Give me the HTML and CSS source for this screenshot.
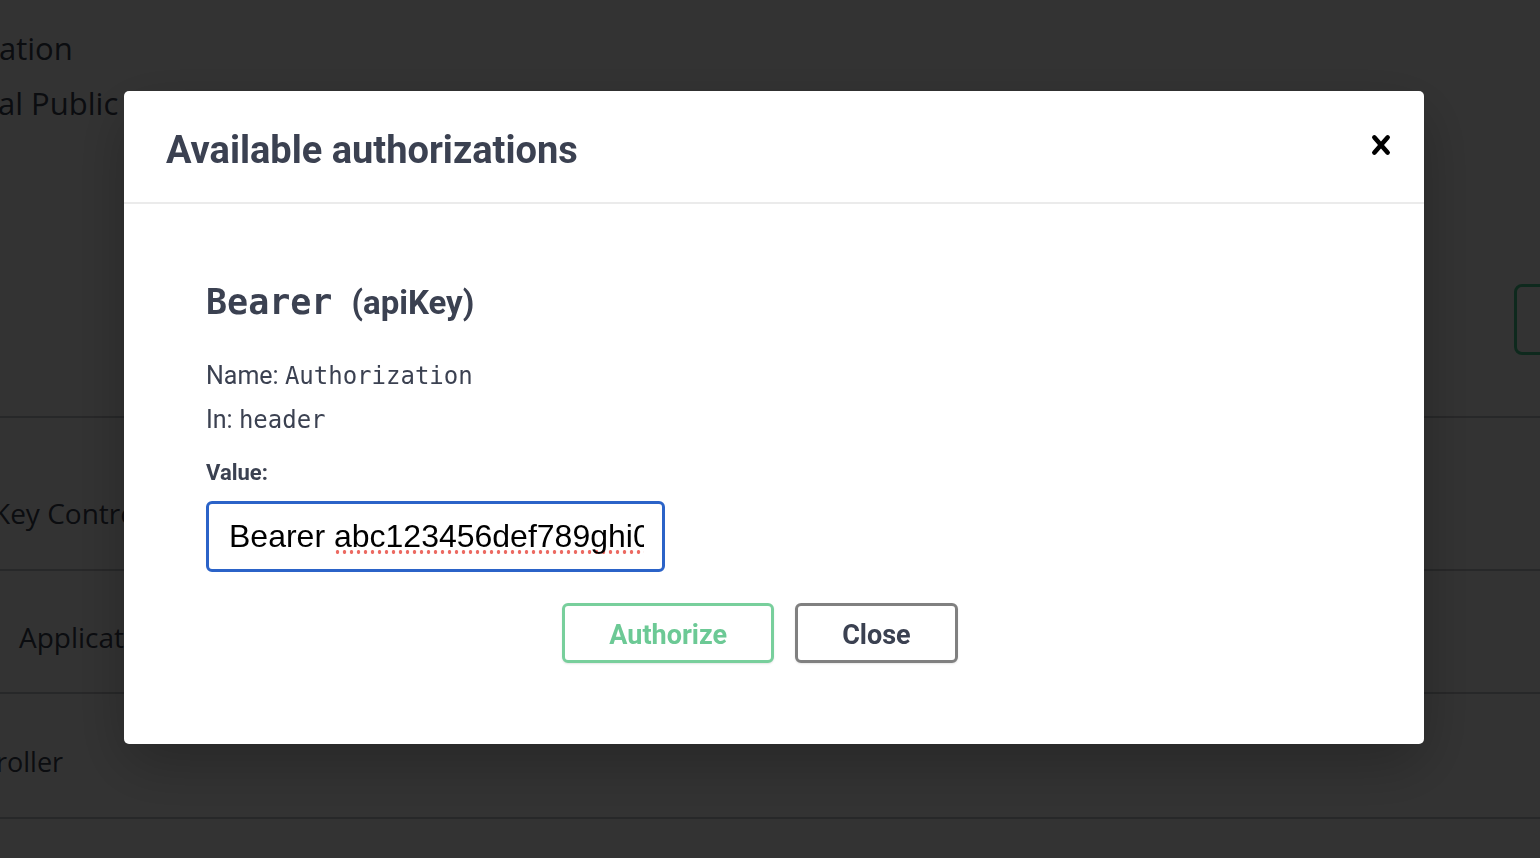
FILE: index.html
```html
<!DOCTYPE html>
<html lang="en">
<head>
<meta charset="utf-8">
<title>Available authorizations</title>
<link rel="stylesheet" href="styles.css">
</head>
<body>
<div class="page">
  <div class="info">
    <div class="info-line info-first">ation</div>
    <div class="info-line info-second">al Public API Documentation</div>
  </div>
  <div class="scheme-bar">
    <div class="page-authorize" aria-label="Authorize"></div>
  </div>
  <div class="tag tag-first"><span class="tag-name tag-name-first">Key Controller</span></div>
  <div class="tag tag-second"><span class="tag-name tag-name-second">Application Controller</span></div>
  <div class="tag tag-third"><span class="tag-name tag-name-third">roller</span></div>
  <div class="tag tag-last"></div>
</div>

<div class="backdrop"></div>

<div class="modal">
  <div class="modal-header">
    <h3 class="modal-title">Available authorizations</h3>
    <button class="modal-close" aria-label="Close">
      <svg width="38" height="38" viewBox="0 0 20 20" aria-hidden="true">
        <path d="M14.348 14.849a1.2 1.2 0 0 1-1.697 0L10 11.819l-2.651 3.029a1.2 1.2 0 1 1-1.697-1.697l2.758-3.15-2.759-3.152a1.2 1.2 0 1 1 1.697-1.697L10 8.183l2.651-3.031a1.2 1.2 0 1 1 1.697 1.697l-2.758 3.152 2.758 3.15a1.2 1.2 0 0 1 0 1.698z"/>
      </svg>
    </button>
  </div>
  <div class="modal-body">
    <h4 class="scheme-title"><code class="scheme-code">Bearer</code><span class="scheme-type">(apiKey)</span></h4>
    <p class="scheme-row scheme-row-first">Name: <code class="scheme-mono">Authorization</code></p>
    <p class="scheme-row">In: <code class="scheme-mono">header</code></p>
    <label class="value-label">Value:</label>
    <div class="value-input">
      <div class="value-text">Bearer <span class="misspelled">abc123456def789ghi0jkl012mno345</span></div>
    </div>
    <div class="btn-row">
      <button class="btn btn-authorize">Authorize</button>
      <button class="btn btn-close">Close</button>
    </div>
  </div>
</div>
</body>
</html>
```

FILE: styles.css
```css
html, body {
  margin: 0;
  padding: 0;
}

body {
  background: #ffffff;
  width: 1540px;
  height: 858px;
  overflow: hidden;
  font-family: "Open Sans", "Liberation Sans", sans-serif;
  color: #3b4151;
}

/* ---------- page beneath the backdrop ---------- */
.page {
  display: flex;
  flex-direction: column;
  height: 858px;
  overflow: hidden;
}

.info {
  padding-top: 21px;
}

.info-line {
  font-size: 31px;
  line-height: 55px;
  white-space: nowrap;
}

.info-first {
  margin-left: -1px;
}

.info-second {
  margin-left: -2px;
}

.scheme-bar {
  display: flex;
  justify-content: flex-end;
  padding: 153px 0 61px;
}

.page-authorize {
  box-sizing: border-box;
  width: 140px;
  height: 71px;
  margin-right: -114px;
  border: 3px solid #49cc90;
  border-radius: 8px;
}

.tag {
  box-sizing: border-box;
  border-top: 2px solid rgba(59, 65, 81, 0.3);
  font-size: 28px;
  line-height: 38px;
  white-space: nowrap;
  flex: none;
}

.tag-first {
  height: 153px;
  padding-top: 76px;
}

.tag-second {
  height: 123px;
  padding-top: 47px;
}

.tag-third {
  height: 125px;
  padding-top: 48px;
}

.tag-last {
  height: 60px;
}

.tag-name-first {
  display: inline-block;
  margin-left: -7px;
}

.tag-name-second {
  display: inline-block;
  margin-left: 19px;
}

.tag-name-third {
  display: inline-block;
  margin-left: -4px;
  font-size: 27px;
}

/* ---------- backdrop ---------- */
.backdrop {
  position: fixed;
  inset: 0;
  background: rgba(0, 0, 0, 0.8);
}

/* ---------- modal ---------- */
.modal {
  position: fixed;
  left: 124px;
  top: 91px;
  width: 1300px;
  background: #ffffff;
  border-radius: 5px;
  box-shadow: 0 20px 60px 0 rgba(0, 0, 0, 0.25);
  font-family: Roboto, "Liberation Sans", sans-serif;
  color: #3b4151;
}

.modal-header {
  box-sizing: border-box;
  height: 113px;
  display: flex;
  align-items: center;
  justify-content: space-between;
  padding: 0 24px 0 42px;
  border-bottom: 2px solid #ebebeb;
}

.modal-title {
  margin: 7px 0 0;
  font-size: 38px;
  font-weight: 700;
  line-height: 44px;
  color: #3b4151;
}

.modal-close {
  margin-top: -3px;
  padding: 0;
  border: 0;
  background: none;
  width: 38px;
  height: 38px;
  display: flex;
}

.modal-close svg {
  fill: #000000;
}

.modal-body {
  padding: 76px 110px 81px 82px;
}

.scheme-title {
  margin: 0;
  display: flex;
  align-items: baseline;
  gap: 19px;
  line-height: 44px;
  color: #3b4151;
}

.scheme-code {
  font-family: "DejaVu Sans Mono", "Liberation Mono", monospace;
  font-size: 35px;
  font-weight: 700;
}

.scheme-type {
  font-size: 33px;
  font-weight: 700;
}

.scheme-row {
  margin: 0;
  font-size: 25px;
  line-height: 44px;
}

.scheme-row-first {
  margin-top: 29px;
}

.scheme-mono {
  font-family: "DejaVu Sans Mono", "Liberation Mono", monospace;
  font-size: 24px;
}

.value-label {
  display: block;
  margin-top: 16px;
  font-size: 22px;
  font-weight: 700;
  line-height: 30px;
}

.value-input {
  box-sizing: border-box;
  margin-top: 13px;
  width: 459px;
  height: 71px;
  padding: 0 18px 0 20px;
  border: 3px solid #2b63c8;
  border-radius: 6px;
  display: flex;
  align-items: center;
}

.value-text {
  overflow: hidden;
  white-space: nowrap;
  font-family: "Liberation Sans", Arial, sans-serif;
  font-size: 32px;
  color: #000000;
}

.misspelled {
  background-image: radial-gradient(circle at 3.5px 2px, #ec6a62 1.6px, rgba(236, 106, 98, 0) 2.1px);
  background-size: 7px 4px;
  background-repeat: repeat-x;
  background-position: 0 100%;
}

.btn-row {
  display: flex;
  justify-content: center;
  gap: 21px;
  margin-top: 31px;
}

.btn {
  box-sizing: border-box;
  height: 60px;
  padding: 0 44px;
  border: 3px solid #808080;
  border-radius: 6px;
  background: #ffffff;
  font-family: Roboto, "Liberation Sans", sans-serif;
  font-size: 27px;
  font-weight: 700;
  line-height: 54px;
  padding-top: 2px;
  box-shadow: 0 1px 2px rgba(0, 0, 0, 0.1);
}

.btn-authorize {
  border-color: #78cf9c;
  color: #6cc995;
}

.btn-close {
  border-color: #808080;
  color: #3b4151;
}
```
